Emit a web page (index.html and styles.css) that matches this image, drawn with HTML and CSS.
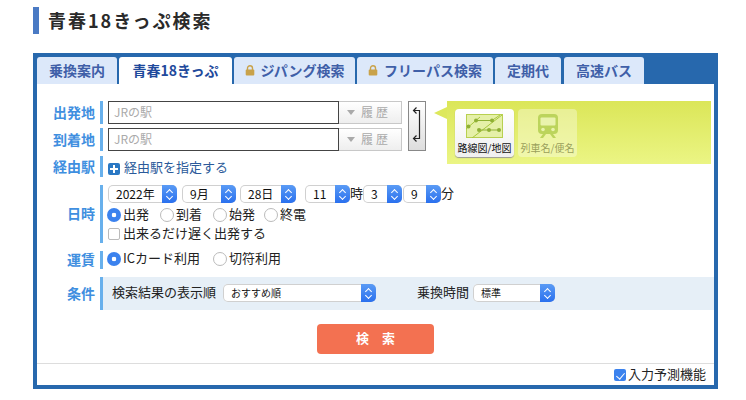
FILE: index.html
```html
<!DOCTYPE html>
<html lang="ja">
<head>
<meta charset="utf-8">
<title>青春18きっぷ検索</title>
<link rel="stylesheet" href="styles.css">
</head>
<body>
<h1 class="title">青春18きっぷ検索</h1>
<div class="panel">
  <div class="tabs">
    <div class="tab t1">乗換案内</div>
    <div class="tab t2 active">青春18きっぷ</div>
    <div class="tab t3"><svg class="lock" viewBox="0 0 10 11"><path d="M2.5 5V3.2a2.5 2.5 0 0 1 5 0V5" fill="none" stroke="#c9a24a" stroke-width="1.4"/><rect x="0.7" y="4.6" width="8.6" height="6" rx="1" fill="#c9a24a"/></svg>ジパング検索</div>
    <div class="tab t4"><svg class="lock" viewBox="0 0 10 11"><path d="M2.5 5V3.2a2.5 2.5 0 0 1 5 0V5" fill="none" stroke="#c9a24a" stroke-width="1.4"/><rect x="0.7" y="4.6" width="8.6" height="6" rx="1" fill="#c9a24a"/></svg>フリーパス検索</div>
    <div class="tab t5">定期代</div>
    <div class="tab t6">高速バス</div>
  </div>
  <div class="body">
    <div class="stations">
      <div class="station-rows">
        <div class="row station">
          <div class="label">出発地</div>
          <div class="field">
            <div class="input">JRの駅</div>
            <div class="history"><span class="tri"></span>履歴</div>
          </div>
        </div>
        <div class="row station">
          <div class="label">到着地</div>
          <div class="field">
            <div class="input">JRの駅</div>
            <div class="history"><span class="tri"></span>履歴</div>
          </div>
        </div>
      </div>
      <div class="swap">
        <svg viewBox="0 0 16 48" width="16" height="48"><path d="M4.5 8.5H10.5V36.5H4.5M7.5 5.5L4.5 8.5L7.5 11.5M7.5 33.5L4.5 36.5L7.5 39.5" fill="none" stroke="#222" stroke-width="1.2"/></svg>
      </div>
      <div class="mapbox">
        <div class="mapbtn on">
          <svg viewBox="0 0 37 24" width="37" height="24"><rect x="0.5" y="0.5" width="36" height="23" fill="#e5f0a8" stroke="#b8d050"/><path d="M0 15L14 3M6 24L36 1M26 6.5L34 1" fill="none" stroke="#a8c63e" stroke-width="1"/><path d="M10 6.5H26M13 16H33" fill="none" stroke="#8fb034" stroke-width="1"/><g fill="#8fb034"><circle cx="2.5" cy="12.5" r="2"/><circle cx="10" cy="6.5" r="2"/><circle cx="26" cy="6.5" r="2"/><circle cx="13" cy="16" r="2"/><circle cx="23" cy="16" r="2"/><circle cx="33" cy="16" r="2"/></g></svg>
          <span>路線図/地図</span>
        </div>
        <div class="mapbtn off">
          <svg viewBox="0 0 20 24" width="20" height="24"><path d="M4 0H16A4 4 0 0 1 20 4V16A4 4 0 0 1 16 20H4A4 4 0 0 1 0 16V4A4 4 0 0 1 4 0Z" fill="#bcd45c"/><rect x="2.5" y="3.5" width="15" height="8" rx="1" fill="#e9f3ad"/><circle cx="5" cy="15.5" r="1.8" fill="#e9f3ad"/><circle cx="15" cy="15.5" r="1.8" fill="#e9f3ad"/><path d="M5 20L2 24H5L8 20M15 20L18 24H15L12 20" fill="#bcd45c"/></svg>
          <span>列車名/便名</span>
        </div>
      </div>
    </div>
    <div class="row via">
      <div class="label">経由駅</div>
      <div class="via-link"><span class="plus"></span>経由駅を指定する</div>
    </div>
    <div class="row date">
      <div class="label">日時</div>
      <div class="date-field">
        <div class="selects">
          <div class="sel year">2022年<i></i></div>
          <div class="sel month">9月<i></i></div>
          <div class="sel day">28日<i></i></div>
          <div class="sel hour">11<i></i></div>
          <span class="unit">時</span>
          <div class="sel min1">3<i></i></div>
          <div class="sel min2">9<i></i></div>
          <span class="unit">分</span>
        </div>
        <div class="radios">
          <span class="opt o1"><b class="radio on"></b>出発</span>
          <span class="opt o1"><b class="radio"></b>到着</span>
          <span class="opt o3"><b class="radio"></b>始発</span>
          <span class="opt"><b class="radio"></b>終電</span>
        </div>
        <div class="late"><b class="check"></b>出来るだけ遅く出発する</div>
      </div>
    </div>
    <div class="row fare">
      <div class="label">運賃</div>
      <div class="fare-field">
        <span class="opt o2"><b class="radio on"></b>ICカード利用</span>
        <span class="opt"><b class="radio"></b>切符利用</span>
      </div>
    </div>
    <div class="row cond">
      <div class="label">条件</div>
      <div class="cond-field">
        <span class="cond-text">検索結果の表示順</span>
        <div class="sel small order">おすすめ順<i></i></div>
        <span class="cond-text cond-time">乗換時間</span>
        <div class="sel small std">標準<i></i></div>
      </div>
    </div>
    <div class="submit"><div class="btn">検　索</div></div>
  </div>
  <div class="foot"><b class="check on"></b>入力予測機能</div>
</div>
</body>
</html>
```

FILE: styles.css
```css
* { box-sizing: border-box; }
html, body { margin: 0; padding: 0; }
body {
  width: 746px;
  height: 400px;
  overflow: hidden;
  background: #fff;
  color: #222;
  font-family: "Noto Sans CJK JP", "Noto Sans", sans-serif;
  font-size: 13px;
  line-height: 16px;
}
.title {
  margin: 7px 0 0 33px;
  height: 27px;
  border-left: 6px solid #4a7ac4;
  padding-left: 9px;
  font-size: 18px;
  letter-spacing: 2px;
  font-weight: 700;
  line-height: 26px;
  color: #2a2a2a;
}
.panel {
  margin: 19px 0 0 33px;
  width: 685px;
  height: 336px;
  border: 4px solid #2768ad;
  background: #fff;
  display: flex;
  flex-direction: column;
}
.tabs {
  display: flex;
  height: 27px;
  background: #2768ad;
  flex: none;
}
.tab {
  height: 27px;
  margin-right: 2px;
  background: #dce8fa;
  border-radius: 3px 3px 0 0;
  color: #3f5fa8;
  font-weight: 700;
  font-size: 14px;
  display: flex;
  align-items: center;
  justify-content: center;
  padding-bottom: 2px;
}
.tab.active { background: #fff; color: #1f4a9c; height: 28px; padding-bottom: 3px; }
.t1 { width: 80px; }
.t2 { width: 113px; }
.t3 { width: 121px; }
.t4 { width: 136px; }
.t5 { width: 66px; margin-right: 3px; }
.t6 { width: 80px; margin-right: 0; }
.lock { width: 10px; height: 11px; margin-right: 6px; margin-top: 2px; }
.body { flex: 1; padding-top: 17px; min-height: 0; }
.row { display: flex; }
.label {
  width: 66px;
  padding-right: 5px;
  padding-bottom: 2px;
  border-right: 3px solid #68b0ec;
  color: #3f8fe0;
  font-weight: 700;
  font-size: 14px;
  flex: none;
  display: flex;
  align-items: center;
  justify-content: flex-end;
}
.stations { display: flex; height: 50px; align-items: flex-start; }
.station-rows { display: flex; flex-direction: column; gap: 4px; }
.station { height: 23px; }
.field { display: flex; margin-left: 5px; }
.input {
  width: 231px;
  height: 23px;
  border: 1px solid #444;
  background: #fff;
  color: #aaa;
  font-size: 12px;
  line-height: 19px;
  padding-left: 5px;
}
.history {
  width: 63px;
  height: 23px;
  border: 1px solid #c8c8c8;
  border-left: 0;
  background: linear-gradient(#fff, #eee);
  color: #aaa;
  font-size: 12px;
  letter-spacing: 3px;
  display: flex;
  align-items: center;
  padding: 0 0 2px 8px;
}
.tri {
  width: 0;
  height: 0;
  border-left: 4px solid transparent;
  border-right: 4px solid transparent;
  border-top: 5px solid #aaa;
  margin: 2px 6px 0 0;
}
.swap {
  width: 18px;
  height: 50px;
  margin-left: 6px;
  border: 1px solid #888;
  background: linear-gradient(#fff, #ddd);
  flex: none;
}
.swap svg { display: block; }
.mapbox {
  position: relative;
  margin-left: 21px;
  width: 264px;
  height: 63px;
  flex: none;
  background: linear-gradient(#dbe658, #ebf584);
  display: flex;
  gap: 4px;
  padding: 8px 0 0 8px;
}
.mapbox::before {
  content: "";
  position: absolute;
  left: -13px;
  top: 6px;
  border-top: 6px solid transparent;
  border-bottom: 6px solid transparent;
  border-right: 13px solid #dde85c;
}
.mapbtn {
  width: 59px;
  height: 48px;
  border-radius: 4px;
  display: flex;
  flex-direction: column;
  align-items: center;
  font-size: 10px;
  line-height: 12px;
  padding-top: 5px;
}
.mapbtn span { margin-top: auto; margin-bottom: 3px; white-space: nowrap; }
.mapbtn.on { background: linear-gradient(#fff, #f0f0f0); color: #111; box-shadow: 0 1px 1px #999; }
.mapbtn.off { background: rgba(255,255,255,.35); color: #9a9f5a; }
.via { margin-top: 5px; height: 21px; }
.via-link {
  margin-left: 5px;
  display: flex;
  align-items: center;
  color: #2b5a9a;
  font-size: 13px;
}
.plus {
  width: 12px;
  height: 12px;
  margin: 4px 4px 0 0;
  border-radius: 2px;
  background:
    linear-gradient(#fff, #fff) center / 8px 2px no-repeat,
    linear-gradient(#fff, #fff) center / 2px 8px no-repeat,
    #2a78c4;
}
.date { margin-top: 8px; height: 58px; }
.date-field { margin-left: 5px; flex: 1; }
.selects { display: flex; height: 18px; align-items: center; }
.sel {
  position: relative;
  height: 18px;
  border-radius: 5px;
  background: #fff;
  box-shadow: inset 0 0 0 1px #d0d0d0;
  font-size: 12px;
  line-height: 17px;
  padding-left: 8px;
  color: #111;
  flex: none;
}
.sel i {
  position: absolute;
  right: 0;
  top: 0;
  width: 15px;
  height: 18px;
  border-radius: 0 5px 5px 0;
  background: linear-gradient(#5a9bf5, #2a70ee);
}
.sel i::before, .sel i::after {
  content: "";
  position: absolute;
  left: 5px;
  width: 4px;
  height: 4px;
  border-left: 1px solid #fff;
  border-top: 1px solid #fff;
}
.sel i::before { top: 5px; transform: rotate(45deg); }
.sel i::after { top: 9px; transform: rotate(225deg); }
.year { width: 69px; margin-right: 5px; }
.month { width: 54px; margin-right: 4px; }
.day { width: 56px; margin-right: 9px; }
.hour { width: 45px; }
.min1 { width: 39px; margin-right: 1px; }
.min2 { width: 38px; }
.unit { width: 13px; font-size: 13px; padding-bottom: 2px; }
.radios { display: flex; height: 15px; margin-top: 4px; margin-left: -1px; align-items: center; }
.opt { display: flex; align-items: center; padding-bottom: 2px; }
.o1 { width: 53px; }
.o2 { width: 106px; }
.o3 { width: 51px; }
.radio {
  width: 14px;
  height: 14px;
  border-radius: 50%;
  border: 1px solid #bbb;
  background: #fff;
  margin: 2px 2px 0 0;
  flex: none;
}
.radio.on {
  border: 0;
  background: radial-gradient(circle, #fff 0 2px, #3b82ee 2.6px);
}
.late { display: flex; align-items: center; height: 15px; margin-top: 4px; padding-bottom: 2px; }
.check {
  width: 12px;
  height: 12px;
  border: 1px solid #bbb;
  border-radius: 2px;
  background: #fff;
  margin: 2px 3px 0 0;
  flex: none;
}
.fare { margin-top: 8px; height: 18px; }
.fare-field { margin-left: 4px; display: flex; align-items: center; padding-bottom: 3px; }
.cond { margin-top: 8px; height: 33px; }
.cond-field {
  flex: 1;
  background: #e6eff7;
  padding-left: 9px;
  display: flex;
  align-items: center;
  padding-bottom: 1px;
}
.cond-text { padding-bottom: 3px; }
.small { font-size: 10px; margin-left: 7px; }
.order { width: 153px; }
.cond-time { margin-left: 41px; }
.std { width: 82px; margin-left: 4px; }
.submit { display: flex; justify-content: center; margin-top: 14px; }
.btn {
  width: 117px;
  height: 30px;
  border-radius: 4px;
  background: #f37151;
  color: #fff;
  font-weight: 700;
  font-size: 13px;
  line-height: 28px;
  text-align: center;
}
.foot {
  flex: none;
  height: 22px;
  border-top: 1px solid #ddd;
  display: flex;
  justify-content: flex-end;
  align-items: center;
  padding: 0 8px 2px 0;
  font-size: 13px;
  color: #222;
}
.check.on {
  border: 0;
  background: #3b82ee;
  position: relative;
  margin-right: 2px;
}
.check.on::after {
  content: "";
  position: absolute;
  left: 4px;
  top: 2px;
  width: 4px;
  height: 7px;
  border-right: 1.5px solid #fff;
  border-bottom: 1.5px solid #fff;
  transform: rotate(40deg);
}
```
